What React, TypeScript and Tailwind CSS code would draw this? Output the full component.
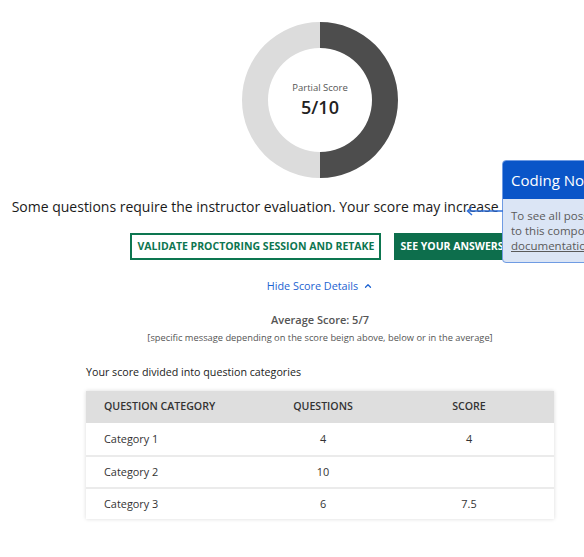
import { ChevronUp } from 'lucide-react'

type Row = { category: string; questions: string; score: string }

const ROWS: Row[] = [
  { category: 'Category 1', questions: '4', score: '4' },
  { category: 'Category 2', questions: '10', score: '' },
  { category: 'Category 3', questions: '6', score: '7.5' },
]

function Donut() {
  // half ring dark, half light
  return (
    <div className="relative w-[156px] h-[156px]">
      <svg width="156" height="156" viewBox="0 0 156 156">
        <path d="M78 0 A78 78 0 0 0 78 156 L78 130 A52 52 0 0 1 78 26 Z" fill="#dcdcdc" />
        <path d="M78 0 A78 78 0 0 1 78 156 L78 130 A52 52 0 0 0 78 26 Z" fill="#4d4d4d" />
      </svg>
      <div className="absolute inset-0 flex flex-col items-center justify-center">
        <div className="text-[9.5px] leading-[14px] text-[#555]">Partial Score</div>
        <div className="text-[18px] leading-[24px] font-semibold text-[#222]">5/10</div>
      </div>
    </div>
  )
}

function CodingNote() {
  return (
    <div className="absolute left-[502px] top-[160px] w-[200px]">
      <svg className="absolute left-[-37px] top-[45px]" width="38" height="12" viewBox="0 0 38 12">
        <line x1="3" y1="6" x2="38" y2="6" stroke="#2f6fd8" strokeWidth="1.5" />
        <path d="M7 2 L2.5 6 L7 10" fill="none" stroke="#2f6fd8" strokeWidth="1.5" />
      </svg>
      <div className="rounded-[4px] border border-[#6f9be3] overflow-hidden bg-[#dbe5f5]">
        <div className="bg-[#0a55c8] text-white text-[15px] leading-[20px] px-[8px] pt-[9px] pb-[9px]">
          Coding Notes
        </div>
        <div className="px-[8px] pt-[9px] pb-[9px] text-[11.5px] leading-[15px] text-[#5a5a5a] whitespace-nowrap">
          To see all possible states related
          <br />
          to this component, check the
          <br />
          <span className="underline">documentation</span>.
        </div>
      </div>
    </div>
  )
}

export default function App() {
  return (
    <div
      className="relative w-[584px] h-[557px] overflow-hidden bg-white"
      style={{ fontFamily: '"Open Sans", "Liberation Sans", sans-serif' }}
    >
      <div className="w-[640px] flex flex-col items-center pt-[22px]">
        <Donut />

        <p className="mt-[17px] text-[14px] leading-[24px] text-[#1a1a1a] whitespace-nowrap">
          Some questions require the instructor evaluation. Your score may increase later after a review.
        </p>

        <div className="mt-[14px] flex gap-[13px]">
          <button className="h-[27px] px-[5px] border-2 border-[#0d7650] text-[#0d7650] text-[10.5px] font-bold">
            VALIDATE PROCTORING SESSION AND RETAKE
          </button>
          <button className="h-[27px] px-[6px] bg-[#0d6e4c] text-white text-[10.5px] font-bold">
            SEE YOUR ANSWERS
          </button>
        </div>

        <button className="mt-[17px] flex items-center gap-[5px] text-[10.8px] leading-[18px] text-[#1d63d1]">
          Hide Score Details
          <ChevronUp size={10} strokeWidth={3} />
        </button>

        <div className="mt-[16px] text-[11px] leading-[18px] font-semibold text-[#555]">Average Score: 5/7</div>
        <div className="mt-[2px] text-[9.3px] leading-[14px] text-[#555]">
          [specific message depending on the score beign above, below or in the average]
        </div>

        <div className="w-[468px] mt-[18px]">
          <div className="text-[10.7px] leading-[18px] text-[#222]">Your score divided into question categories</div>
          <div className="mt-[10px] bg-white shadow-[0_0_4px_rgba(0,0,0,0.15)]">
            <div className="grid grid-cols-[176px_122px_170px] h-[32px] items-center bg-[#dedede] text-[10.6px] font-semibold text-[#333]">
              <div className="pl-[18px]">QUESTION CATEGORY</div>
              <div className="text-center">QUESTIONS</div>
              <div className="text-center">SCORE</div>
            </div>
            {ROWS.map((row, i) => (
              <div
                key={row.category}
                className={`grid grid-cols-[176px_122px_170px] h-[32px] items-center text-[10.9px] text-[#333] ${i > 0 ? 'border-t-2 border-[#ebebeb]' : ''}`}
              >
                <div className="pl-[18px]">{row.category}</div>
                <div className="text-center">{row.questions}</div>
                <div className="text-center">{row.score}</div>
              </div>
            ))}
          </div>
        </div>
      </div>

      <CodingNote />
    </div>
  )
}
